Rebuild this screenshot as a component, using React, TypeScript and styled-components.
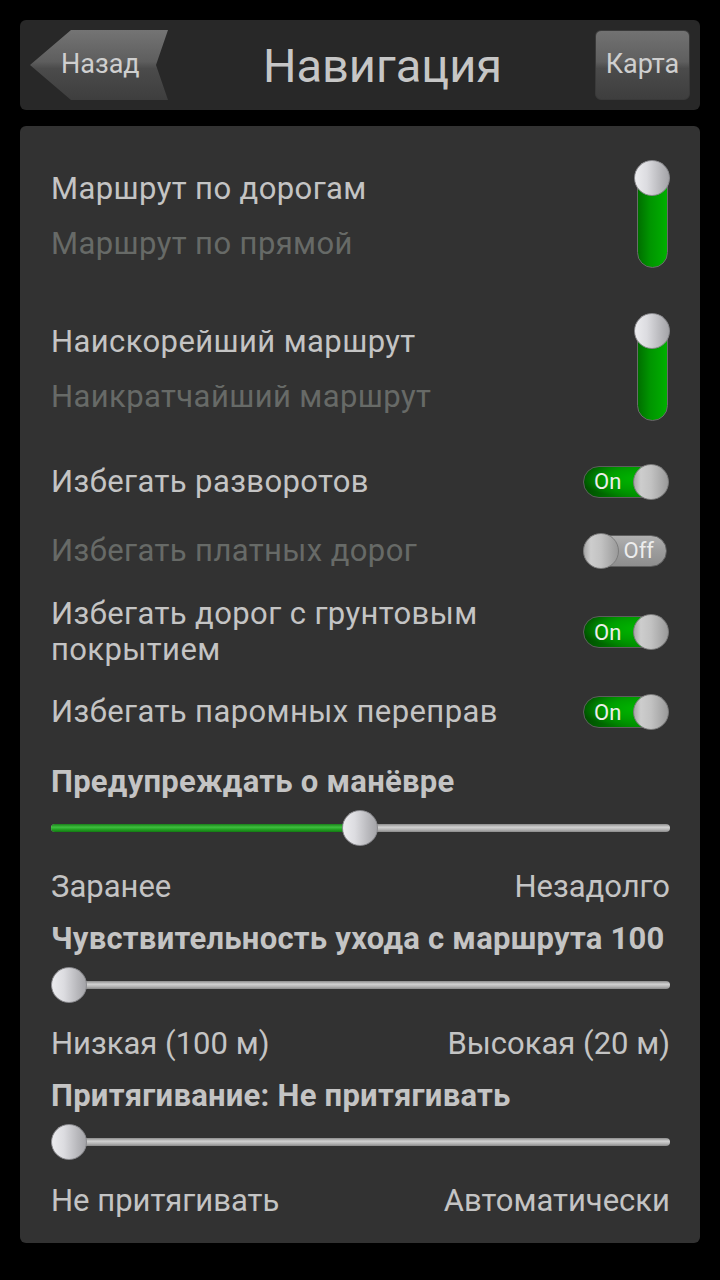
import React from "react";
import styled, { createGlobalStyle } from "styled-components";

const GlobalStyle = createGlobalStyle`
  html, body {
    margin: 0;
    padding: 0;
    background: #000;
  }
  body {
    font-family: Roboto, "Noto Sans", "DejaVu Sans", sans-serif;
  }
`;

const Screen = styled.div`
  width: 720px;
  height: 1280px;
  box-sizing: border-box;
  padding: 20px;
  display: flex;
  flex-direction: column;
  gap: 16px;
  background: #000;
`;

const Header = styled.header`
  height: 90px;
  box-sizing: border-box;
  padding: 10px;
  display: flex;
  align-items: stretch;
  background: #282828;
  border-radius: 6px;
`;

const BackButton = styled.button`
  width: 138px;
  border: none;
  padding: 0 0 2px 31px;
  margin: 0;
  background: linear-gradient(to bottom, #747474 0%, #5e5e5e 45%, #4b4b4b 55%, #3e3e3e 100%);
  clip-path: polygon(0 50%, 41px 0, 100% 0, 126px 50%, 100% 100%, 41px 100%);
  color: #cfcfcf;
  font-family: Roboto, sans-serif;
  font-size: 27px;
  text-align: left;
  display: flex;
  align-items: center;
`;

const Title = styled.h1`
  flex: 1;
  margin: 0;
  display: flex;
  align-items: center;
  justify-content: center;
  padding: 0 0 0 2px;
  color: #c6c6c6;
  font-family: Roboto, sans-serif;
  font-weight: 400;
  font-size: 47px;
`;

const MapButton = styled.button`
  width: 95px;
  border: 1px solid #3a3a3a;
  border-radius: 6px;
  padding: 0 0 2px 0;
  margin: 0;
  background: linear-gradient(to bottom, #727272 0%, #5f5f5f 45%, #4b4b4b 55%, #3e3e3e 100%);
  color: #cfcfcf;
  font-family: Roboto, sans-serif;
  font-size: 27px;
`;

const Panel = styled.main`
  flex: 0 0 1117px;
  box-sizing: border-box;
  padding: 34px 30px 24px 31px;
  display: flex;
  flex-direction: column;
  background: #323232;
  border-radius: 6px;
`;

const ChoiceGroup = styled.div<{ $mt?: number }>`
  height: 108px;
  margin-top: ${(p) => p.$mt ?? 0}px;
  display: flex;
  justify-content: space-between;
`;

const ChoiceTexts = styled.div`
  display: flex;
  flex-direction: column;
  padding-top: 1px;
`;

const Option = styled.div<{ $dim?: boolean }>`
  font-size: 31px;
  line-height: 55px;
  letter-spacing: 0.4px;
  color: ${(p) => (p.$dim ? "#676a67" : "#c4c4c4")};
  white-space: nowrap;
`;

const VSwitch = styled.div`
  position: relative;
  width: 36px;
  height: 108px;
`;

const VTrack = styled.div`
  position: absolute;
  left: 3px;
  top: 18px;
  bottom: 0;
  width: 31px;
  box-sizing: border-box;
  border: 1px solid #6a6a6a;
  border-radius: 0 0 16px 16px;
  background: linear-gradient(to right, #006f00 0%, #009400 40%, #00b000 100%);
`;

const Knob = styled.div<{ $size: number }>`
  position: absolute;
  width: ${(p) => p.$size}px;
  height: ${(p) => p.$size}px;
  box-sizing: border-box;
  border-radius: 50%;
  border: 1px solid #8a8a8e;
  background: linear-gradient(to right, #ececef 0%, #dcdce0 35%, #b8b8bc 75%, #a4a4a8 100%);
`;

const ToggleRow = styled.div<{ $h: number }>`
  height: ${(p) => p.$h}px;
  display: flex;
  align-items: center;
  justify-content: space-between;
`;

const RowLabel = styled.div<{ $dim?: boolean }>`
  font-size: 31px;
  line-height: 36px;
  letter-spacing: 0.4px;
  color: ${(p) => (p.$dim ? "#676a67" : "#c4c4c4")};
  max-width: 480px;
`;

const Toggle = styled.div`
  position: relative;
  flex: 0 0 86px;
  width: 86px;
  height: 36px;
  margin-right: 1px;
`;

const ToggleTrack = styled.div<{ $on: boolean }>`
  position: absolute;
  left: 0;
  top: 2px;
  width: 84px;
  height: 32px;
  box-sizing: border-box;
  border: 1px solid #5e5e5e;
  border-radius: 16px;
  display: flex;
  align-items: center;
  justify-content: ${(p) => (p.$on ? "flex-start" : "flex-end")};
  padding: ${(p) => (p.$on ? "0 0 0 10px" : "0 12px 0 0")};
  background: ${(p) =>
    p.$on
      ? "radial-gradient(ellipse at 70% 40%, #00b800 0%, #00a000 40%, transparent 75%), linear-gradient(to right, #004e00 0%, #007a00 40%, #00a800 100%)"
      : "linear-gradient(to bottom, #b0b0b0 0%, #9c9c9c 50%, #8e8e8e 100%)"};
  color: #ededed;
  font-size: 22px;
`;

const ToggleKnob = styled.div<{ $on: boolean }>`
  position: absolute;
  top: 0;
  ${(p) => (p.$on ? "right: 0;" : "left: 0;")}
  width: 36px;
  height: 36px;
  box-sizing: border-box;
  border-radius: 50%;
  border: 1px solid #7c7c7c;
  background: linear-gradient(to right, #a8a8a8 0%, #cdcdcd 20%, #c2c2c2 50%, #a6a6a6 85%, #9a9a9a 100%);
`;

const SliderSection = styled.section<{ $mt: number }>`
  margin-top: ${(p) => p.$mt}px;
  display: flex;
  flex-direction: column;
`;

const SliderTitle = styled.div`
  font-size: 31px;
  font-weight: 700;
  line-height: 36px;
  letter-spacing: 0.25px;
  color: #c4c4c4;
  white-space: nowrap;
`;

const SliderBox = styled.div`
  position: relative;
  height: 56px;
  margin-bottom: 13px;
  display: flex;
  align-items: center;
`;

const SliderTrack = styled.div`
  position: relative;
  width: 100%;
  height: 8px;
  border-radius: 4px;
  background: linear-gradient(to bottom, #8c8c8c 0%, #d2d2d2 40%, #b4b4b4 70%, #8a8a8a 100%);
`;

const SliderFill = styled.div`
  position: absolute;
  left: 0;
  top: 0;
  bottom: 0;
  border-radius: 4px;
  background: linear-gradient(to bottom, #1a7f1a 0%, #3fc03f 40%, #22a022 70%, #137a13 100%);
`;

const SliderLabels = styled.div`
  display: flex;
  justify-content: space-between;
  font-size: 31px;
  line-height: 36px;
  color: #c4c4c4;
`;

const Spacer = styled.div<{ $h: number }>`
  flex: 0 0 ${(p) => p.$h}px;
`;

function VerticalSwitch() {
  return (
    <VSwitch>
      <VTrack />
      <Knob $size={36} style={{ left: 0, top: 0 }} />
    </VSwitch>
  );
}

function OnOff({ on }: { on: boolean }) {
  return (
    <Toggle>
      <ToggleTrack $on={on}>{on ? "On" : "Off"}</ToggleTrack>
      <ToggleKnob $on={on} />
    </Toggle>
  );
}

function Slider({ value }: { value: number }) {
  const trackWidth = 618;
  const knob = 36;
  const center = knob / 2 + value * (trackWidth - knob);
  return (
    <SliderBox>
      <SliderTrack>
        {value > 0 && <SliderFill style={{ width: center }} />}
      </SliderTrack>
      <Knob $size={knob} style={{ left: center - knob / 2, top: 10 }} />
    </SliderBox>
  );
}

export default function App() {
  return (
    <>
      <GlobalStyle />
      <Screen>
        <Header>
          <BackButton>Назад</BackButton>
          <Title>Навигация</Title>
          <MapButton>Карта</MapButton>
        </Header>
        <Panel>
          <ChoiceGroup>
            <ChoiceTexts>
              <Option>Маршрут по дорогам</Option>
              <Option $dim>Маршрут по прямой</Option>
            </ChoiceTexts>
            <VerticalSwitch />
          </ChoiceGroup>
          <ChoiceGroup $mt={45}>
            <ChoiceTexts>
              <Option>Наискорейший маршрут</Option>
              <Option $dim>Наикратчайший маршрут</Option>
            </ChoiceTexts>
            <VerticalSwitch />
          </ChoiceGroup>
          <Spacer $h={26} />
          <ToggleRow $h={69}>
            <RowLabel>Избегать разворотов</RowLabel>
            <OnOff on />
          </ToggleRow>
          <ToggleRow $h={69}>
            <RowLabel $dim>Избегать платных дорог</RowLabel>
            <OnOff on={false} />
          </ToggleRow>
          <ToggleRow $h={94}>
            <RowLabel>Избегать дорог с грунтовым покрытием</RowLabel>
            <OnOff on />
          </ToggleRow>
          <ToggleRow $h={66}>
            <RowLabel>Избегать паромных переправ</RowLabel>
            <OnOff on />
          </ToggleRow>
          <SliderSection $mt={19}>
            <SliderTitle>Предупреждать о манёвре</SliderTitle>
            <Slider value={0.5} />
            <SliderLabels>
              <span>Заранее</span>
              <span>Незадолго</span>
            </SliderLabels>
          </SliderSection>
          <SliderSection $mt={16}>
            <SliderTitle>Чувствительность ухода с маршрута 100</SliderTitle>
            <Slider value={0} />
            <SliderLabels>
              <span>Низкая (100 м)</span>
              <span>Высокая (20 м)</span>
            </SliderLabels>
          </SliderSection>
          <SliderSection $mt={16}>
            <SliderTitle>Притягивание: Не притягивать</SliderTitle>
            <Slider value={0} />
            <SliderLabels>
              <span>Не притягивать</span>
              <span>Автоматически</span>
            </SliderLabels>
          </SliderSection>
        </Panel>
      </Screen>
    </>
  );
}
